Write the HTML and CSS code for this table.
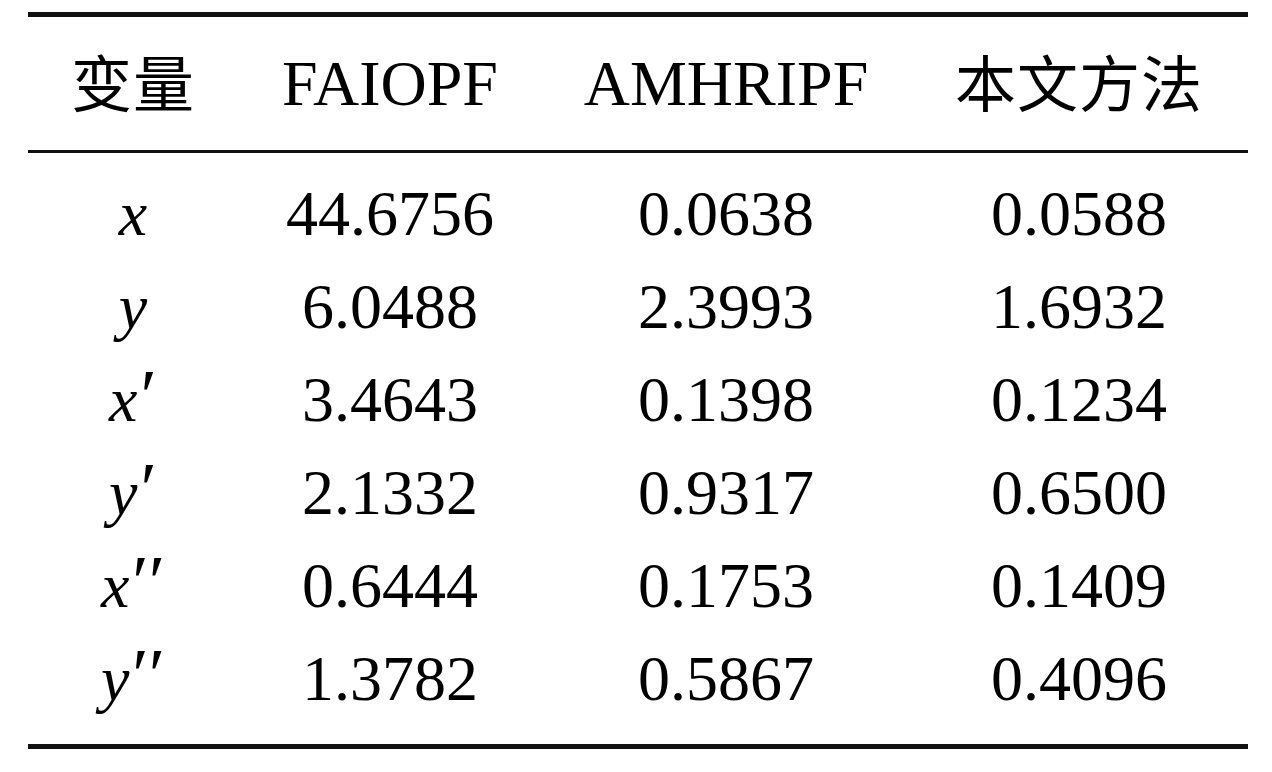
FILE: index.html
```html
<!DOCTYPE html>
<html lang="zh">
<head>
    <meta charset="UTF-8">
    <title>变量对比</title>
    <link rel="stylesheet" href="styles.css">
</head>
<body>

    <table class="results">
        <colgroup>
            <col class="c-var">
            <col class="c-a">
            <col class="c-b">
            <col class="c-c">
        </colgroup>
        <thead>
            <tr>
                <th><span class="zh">变量</span></th>
                <th>FAIOPF</th>
                <th>AMHRIPF</th>
                <th><span class="zh">本文方法</span></th>
            </tr>
        </thead>
        <tbody>
            <tr class="first">
                <td><i class="v">x</i></td>
                <td>44.6756</td>
                <td>0.0638</td>
                <td>0.0588</td>
            </tr>
            <tr>
                <td><i class="v">y</i></td>
                <td>6.0488</td>
                <td>2.3993</td>
                <td>1.6932</td>
            </tr>
            <tr>
                <td><i class="v">x</i><span class="pr">′</span></td>
                <td>3.4643</td>
                <td>0.1398</td>
                <td>0.1234</td>
            </tr>
            <tr>
                <td><i class="v">y</i><span class="pr">′</span></td>
                <td>2.1332</td>
                <td>0.9317</td>
                <td>0.6500</td>
            </tr>
            <tr>
                <td><i class="v">x</i><span class="pr">′′</span></td>
                <td>0.6444</td>
                <td>0.1753</td>
                <td>0.1409</td>
            </tr>
            <tr class="last">
                <td><i class="v">y</i><span class="pr">′′</span></td>
                <td>1.3782</td>
                <td>0.5867</td>
                <td>0.4096</td>
            </tr>
        </tbody>
    </table>

</body>
</html>
```

FILE: styles.css
```css
/* page */
body {
    margin: 0;
    padding: 12px 0 0 28px;
    background: #fff;
    color: #000;
    font-family: "Liberation Serif", "Noto Sans CJK SC", serif;
}

/* table with booktabs rules */
.results {
    width: 1220px;
    table-layout: fixed;
    border-collapse: separate;
    border-spacing: 0;
    font-size: 64px;
}

.c-var { width: 210px; }
.c-a { width: 304px; }
.c-b { width: 368px; }
.c-c { width: 338px; }

.results th,
.results td {
    padding: 0;
    text-align: center;
    font-weight: normal;
    white-space: nowrap;
}

.results th {
    line-height: 128px;
    border-top: 5px solid #111;
    border-bottom: 3px solid #111;
}

.results td {
    line-height: 93px;
}

.results tr.first td {
    padding-top: 14px;
}

.results tr.last td {
    padding-bottom: 19px;
    border-bottom: 5px solid #111;
}

.zh {
    font-family: "Noto Sans CJK SC", sans-serif;
    font-size: 61px;
    letter-spacing: 1px;
}

/* math variables */
.v {
    font-family: "Liberation Serif", serif;
    font-style: italic;
}

.pr {
    font-family: "Liberation Serif", serif;
    font-size: 75px;
    line-height: 0;
    margin-left: 3px;
    letter-spacing: 0;
}
```
